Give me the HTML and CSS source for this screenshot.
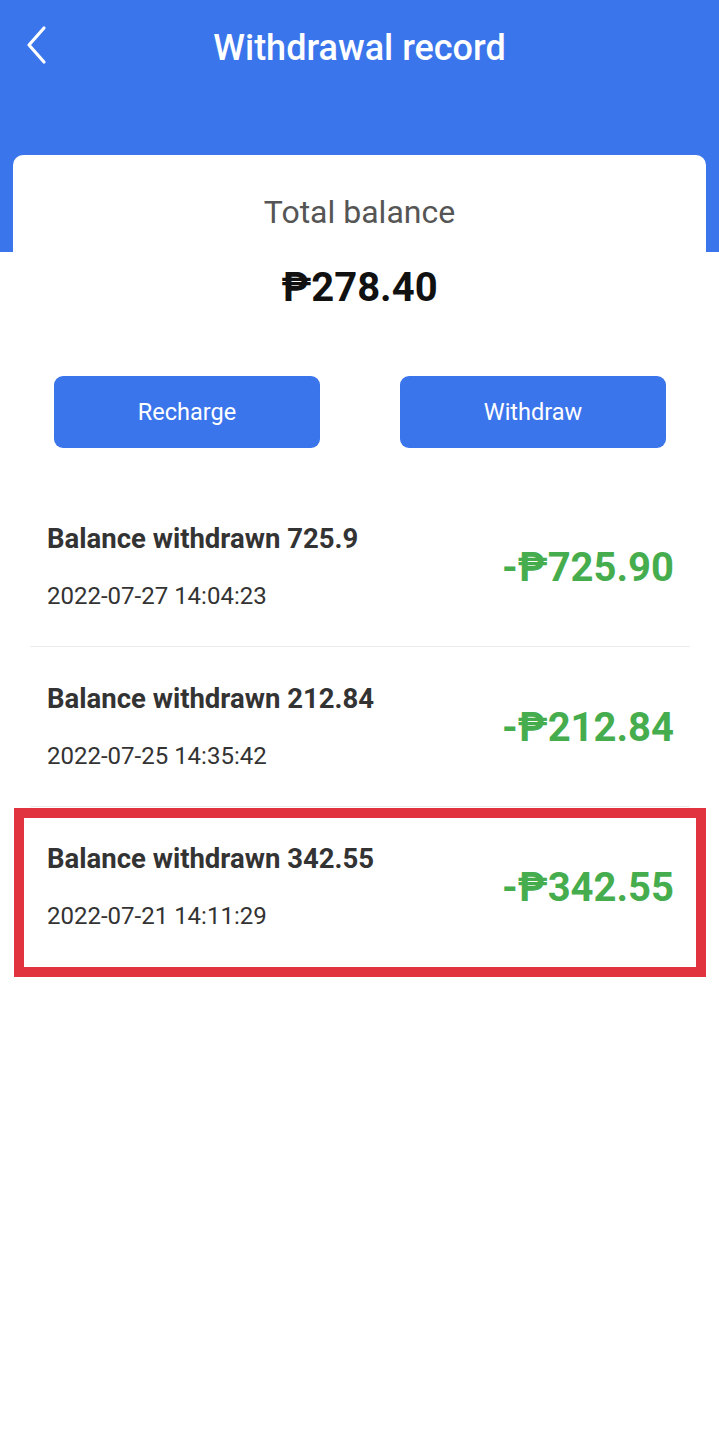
FILE: index.html
```html
<!DOCTYPE html>
<html lang="en">
<head>
    <meta charset="UTF-8">
    <meta name="viewport" content="width=device-width, initial-scale=1.0">
    <title>Withdrawal record</title>
    <link rel="stylesheet" href="styles.css">
</head>
<body>
    <div class="page">
        <div class="top-bar">
            <a class="back" href="#">
                <svg width="24" height="40" viewBox="0 0 24 40">
                    <path d="M20 3 L5 20 L20 37" fill="none" stroke="#fff" stroke-width="3.2" stroke-linecap="round" stroke-linejoin="round"/>
                </svg>
            </a>
            <h1>Withdrawal record</h1>
        </div>

        <div class="balance-card">
            <div class="balance-label">Total balance</div>
            <div class="balance-amount">₱278.40</div>
            <div class="actions">
                <button>Recharge</button>
                <button>Withdraw</button>
            </div>
        </div>

        <div class="records">
            <div class="record">
                <div class="record-info">
                    <div class="record-title">Balance withdrawn 725.9</div>
                    <div class="record-date">2022-07-27 14:04:23</div>
                </div>
                <div class="record-amount">-₱725.90</div>
            </div>
            <div class="record">
                <div class="record-info">
                    <div class="record-title">Balance withdrawn 212.84</div>
                    <div class="record-date">2022-07-25 14:35:42</div>
                </div>
                <div class="record-amount">-₱212.84</div>
            </div>
            <div class="record marked">
                <div class="record-info">
                    <div class="record-title">Balance withdrawn 342.55</div>
                    <div class="record-date">2022-07-21 14:11:29</div>
                </div>
                <div class="record-amount">-₱342.55</div>
            </div>
        </div>
    </div>
</body>
</html>
```

FILE: styles.css
```css
body, html {
    margin: 0;
    padding: 0;
    font-family: Roboto, 'DejaVu Sans', sans-serif;
    background-color: #fff;
    color: #333;
}

.page {
    width: 719px;
    min-height: 1441px;
    background: linear-gradient(#3b75ec 0, #3b75ec 252px, #fff 252px);
}

.top-bar {
    position: relative;
    height: 96px;
    display: flex;
    align-items: center;
    justify-content: center;
}

.top-bar h1 {
    margin: 0;
    color: #fff;
    font-size: 36px;
    font-weight: 500;
}

.back {
    position: absolute;
    left: 24px;
    top: 25px;
    display: block;
    height: 40px;
}

.balance-card {
    margin: 59px 13px 0;
    background-color: #fff;
    border-radius: 10px;
    padding-top: 37px;
    text-align: center;
}

.balance-label {
    font-size: 32px;
    color: #555;
    line-height: 40px;
}

.balance-amount {
    margin-top: 32px;
    font-size: 40px;
    font-weight: 700;
    color: #111;
    line-height: 48px;
}

.actions {
    display: flex;
    justify-content: space-between;
    padding: 64px 40px 0 41px;
}

.actions button {
    width: 266px;
    height: 72px;
    border: none;
    border-radius: 9px;
    background-color: #3b75ec;
    color: #fff;
    font-family: Roboto, sans-serif;
    font-size: 23.5px;
}

.records {
    margin: 39px 29px 0 30px;
}

.record {
    position: relative;
    display: flex;
    align-items: center;
    justify-content: space-between;
    height: 159px;
    padding: 0 16px 0 17px;
    border-bottom: 1px solid #ececec;
}

.record:last-child {
    border-bottom: none;
}

.record-title {
    font-size: 27.5px;
    font-weight: 700;
    color: #333;
    line-height: 32px;
}

.record-date {
    margin-top: 27px;
    font-size: 24px;
    color: #333;
    line-height: 28px;
}

.record-amount {
    font-size: 40px;
    font-weight: 700;
    color: #46ad4e;
    padding-top: 2px;
}

.marked::after {
    content: "";
    position: absolute;
    left: -16px;
    right: -16px;
    top: 1px;
    height: 149px;
    border: 10px solid #e0323f;
}
```
